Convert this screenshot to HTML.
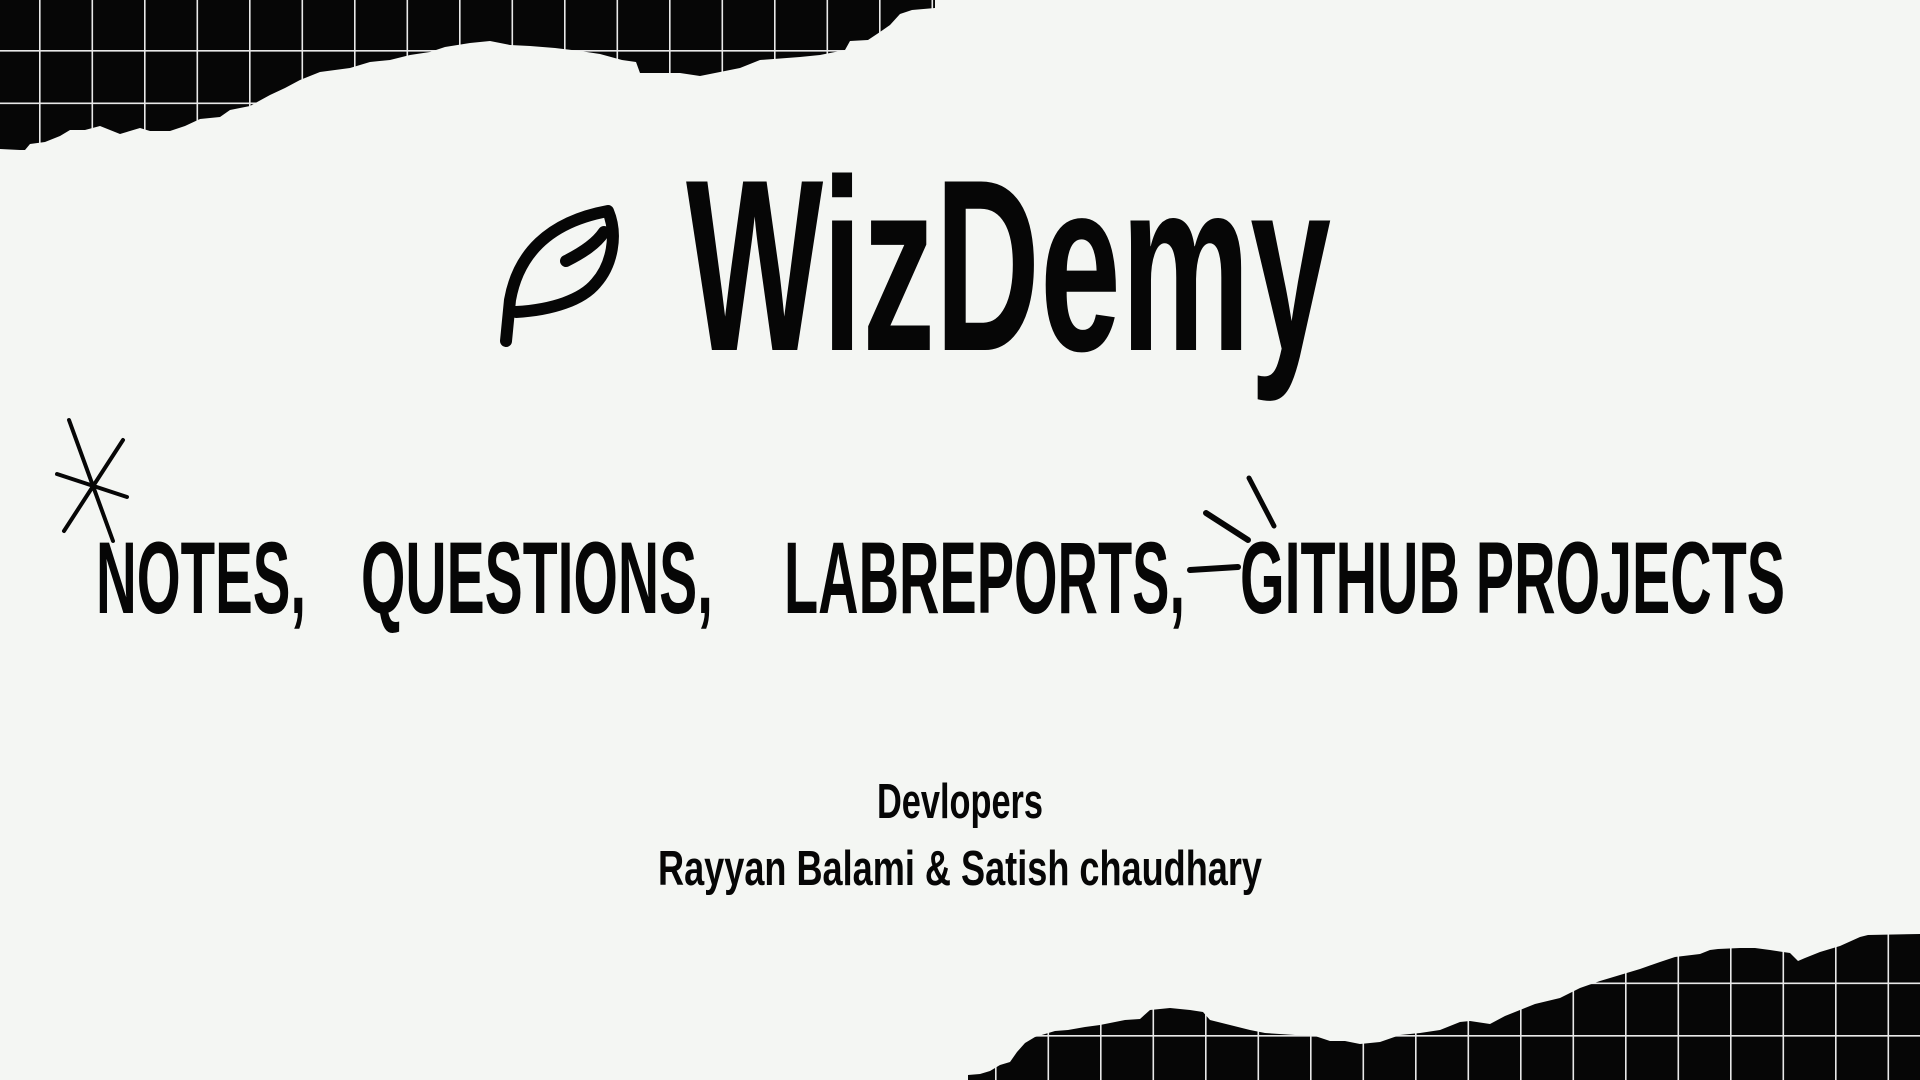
<!DOCTYPE html>
<html><head><meta charset="utf-8"><style>
html,body{margin:0;padding:0;width:1920px;height:1080px;overflow:hidden;background:#f4f6f3}
svg{display:block}
</style></head><body>
<svg width="1920" height="1080" viewBox="0 0 1920 1080" xmlns="http://www.w3.org/2000/svg">
<defs>
<pattern id="grid" x="-13.5" y="-2.5" width="52.5" height="52.5" patternUnits="userSpaceOnUse">
<rect width="52.5" height="52.5" fill="#060606"/>
<path d="M0 0.5H52.5M0.5 0V52.5" stroke="#e8e8e8" stroke-width="2.2" fill="none"/>
</pattern>
<pattern id="grid2" x="-2.5" y="-15" width="52.5" height="52.5" patternUnits="userSpaceOnUse">
<rect width="52.5" height="52.5" fill="#060606"/>
<path d="M0 0.5H52.5M0.5 0V52.5" stroke="#e8e8e8" stroke-width="2.2" fill="none"/>
</pattern>
</defs>
<path fill="url(#grid)" d="M0 0H935V8L912 10L900 14L890 25L880 32L868 40L850 41L845 50L830 53L820 55L800 57L760 60L740 68L720 72L700 76L680 73L640 73L636 62L622 60L600 54L580 51L555 48L530 46L510 45L490 41L470 43L445 47L430 52L410 55L390 60L370 62L350 68L320 72L300 80L285 88L270 95L250 106L230 110L220 117L200 119L185 126L170 131L150 131L140 128L120 134L100 126L85 130L70 130L60 136L45 142L30 144L25 150L20 150L0 149Z"/>
<path fill="url(#grid2)" d="M1920 1080H968V1075L980 1074L990 1071L1000 1065L1010 1062L1017 1052L1025 1043L1035 1037L1055 1031L1068 1030L1085 1027L1100 1025L1125 1020L1140 1019L1150 1010L1170 1008L1190 1010L1203 1012L1210 1020L1230 1025L1250 1030L1265 1033L1295 1035L1315 1036L1330 1041L1345 1041L1360 1044L1380 1042L1400 1035L1420 1033L1440 1030L1460 1022L1470 1021L1490 1024L1505 1016L1515 1012L1535 1004L1560 998L1580 988L1600 981L1620 975L1640 969L1660 962L1675 957L1700 954L1710 950L1718 949L1740 948L1755 948L1770 950L1790 953L1798 961L1805 958L1820 952L1840 946L1860 937L1868 935L1920 934Z"/>

<!-- leaf -->
<g fill="none" stroke="#060606" stroke-width="12" stroke-linecap="round" stroke-linejoin="round">
<path d="M506 341L510 300C518 255 548 222 608 211C618 235 612 265 596 283C582 300 552 310 516 312"/>
<path d="M566 261C582 253 596 244 604 232"/>
</g>

<g font-family="Liberation Sans, sans-serif" font-weight="bold" fill="#060606">
<text x="686" y="350" font-size="245" textLength="645" lengthAdjust="spacingAndGlyphs">WizDemy</text>
<text x="96" y="613" font-size="102" textLength="210" lengthAdjust="spacingAndGlyphs">NOTES,</text>
<text x="361" y="613" font-size="102" textLength="352" lengthAdjust="spacingAndGlyphs">QUESTIONS,</text>
<text x="784" y="613" font-size="102" textLength="401" lengthAdjust="spacingAndGlyphs">LABREPORTS,</text>
<text x="1240" y="613" font-size="102" textLength="545" lengthAdjust="spacingAndGlyphs">GITHUB PROJECTS</text>
<text x="877" y="818" font-size="49" textLength="166" lengthAdjust="spacingAndGlyphs">Devlopers</text>
<text x="658" y="885" font-size="49" textLength="604" lengthAdjust="spacingAndGlyphs">Rayyan Balami &amp; Satish chaudhary</text>
</g>

<!-- star & marks -->
<g stroke="#060606" stroke-width="4" stroke-linecap="round" fill="none">
<path d="M69 420L113 541"/>
<path d="M123 440L64 531"/>
<path d="M57 474L127 497"/>
<path d="M1249 478L1274 526" stroke-width="5"/>
<path d="M1206 513L1248 540" stroke-width="6"/>
<path d="M1190 570L1238 567" stroke-width="6"/>
</g>
</svg>
</body></html>
